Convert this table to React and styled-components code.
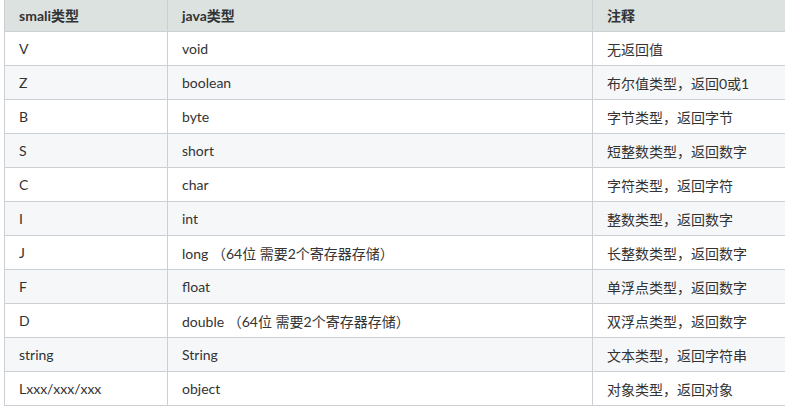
import React from 'react'
import styled, { createGlobalStyle } from 'styled-components'

const GlobalStyle = createGlobalStyle`
  body {
    margin: 0;
    background: #fff;
    font-family: Lato, "Noto Sans CJK SC", "Noto Sans", sans-serif;
  }
`

const Wrapper = styled.div`
  width: 785px;
  height: 408px;
  overflow: hidden;
  padding-left: 4px;
  box-sizing: border-box;
`

const Table = styled.table`
  margin-top: -3px;
  width: 840px;
  border-collapse: collapse;
  table-layout: fixed;
  font-size: 14px;
  color: #333;
`

const HeadCell = styled.th`
  height: 34px;
  padding: 0 14px;
  text-align: left;
  font-weight: 700;
  background: #dbe2df;
  border: 1px solid #ccd0d4;
  box-sizing: border-box;
`

const Row = styled.tr`
  background: ${(p) => (p.$odd ? '#f6f7f9' : '#fff')};
`

const Cell = styled.td`
  height: 34px;
  padding: 0 14px;
  border: 1px solid #ccd0d4;
  white-space: nowrap;
  box-sizing: border-box;
`

const rows = [
  ['V', 'void', '无返回值'],
  ['Z', 'boolean', '布尔值类型，返回0或1'],
  ['B', 'byte', '字节类型，返回字节'],
  ['S', 'short', '短整数类型，返回数字'],
  ['C', 'char', '字符类型，返回字符'],
  ['I', 'int', '整数类型，返回数字'],
  ['J', 'long （64位 需要2个寄存器存储）', '长整数类型，返回数字'],
  ['F', 'float', '单浮点类型，返回数字'],
  ['D', 'double （64位 需要2个寄存器存储）', '双浮点类型，返回数字'],
  ['string', 'String', '文本类型，返回字符串'],
  ['Lxxx/xxx/xxx', 'object', '对象类型，返回对象'],
]

export default function App() {
  return (
    <Wrapper>
      <GlobalStyle />
      <Table>
        <colgroup>
          <col style={{ width: 163 }} />
          <col style={{ width: 425 }} />
          <col />
        </colgroup>
        <thead>
          <tr>
            <HeadCell>smali类型</HeadCell>
            <HeadCell>java类型</HeadCell>
            <HeadCell>注释</HeadCell>
          </tr>
        </thead>
        <tbody>
          {rows.map((r, i) => (
            <Row key={r[0]} $odd={i % 2 === 1}>
              <Cell>{r[0]}</Cell>
              <Cell>{r[1]}</Cell>
              <Cell>{r[2]}</Cell>
            </Row>
          ))}
        </tbody>
      </Table>
    </Wrapper>
  )
}
